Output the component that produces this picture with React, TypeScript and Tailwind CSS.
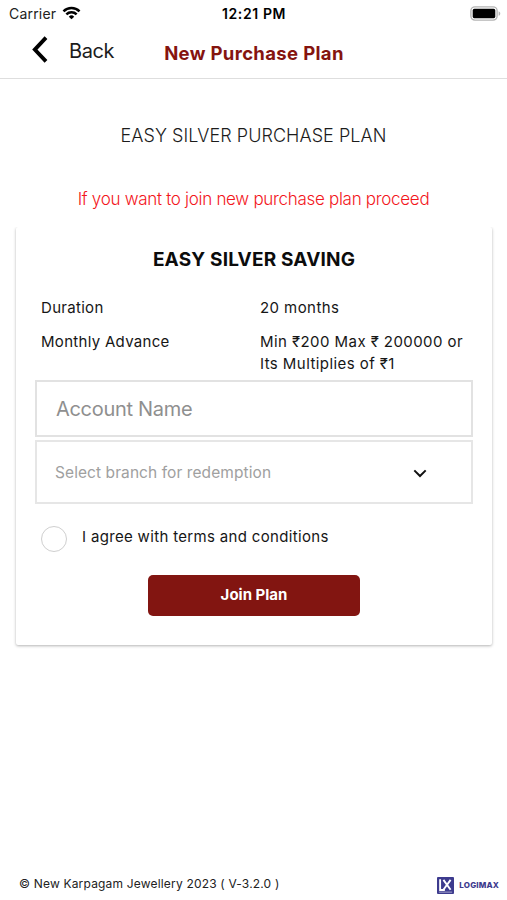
import React from 'react';

interface PlanRowProps {
  label: string;
  children: React.ReactNode;
}

const WifiIcon = () => (
  <svg className="w-[19px] h-[14px] shrink-0" viewBox="0 0 20 15" fill="none" stroke="#000" strokeWidth="2.7">
    <path d="M1.4 5.8a12.2 12.2 0 0 1 17.2 0" />
    <path d="M4.5 8.9a7.8 7.8 0 0 1 11 0" />
    <path d="M10 14.3l-2.9-2.9a4.1 4.1 0 0 1 5.8 0z" fill="#000" stroke="none" />
  </svg>
);

const BatteryIcon = () => (
  <svg className="w-[31px] h-[15px] shrink-0" viewBox="0 0 31 15">
    <rect x="0.9" y="0.9" width="26.2" height="13.2" rx="4" fill="#fff" stroke="#b4b4b4" strokeWidth="1.4" />
    <rect x="2.7" y="2.8" width="22.6" height="9.4" rx="1.6" fill="#000" />
    <path d="M28.6 5.2c2.2.8 2.2 3.8 0 4.6z" fill="#b4b4b4" />
  </svg>
);

const StatusBar = () => (
  <div className="relative h-[26px] flex items-center justify-between pl-[9px] pr-[6px] text-[14px]">
    <div className="flex items-center gap-[6px] text-[#222]">
      <span className="tracking-[0.2px]">Carrier</span>
      <WifiIcon />
    </div>
    <span className="absolute left-[222px] font-semibold tracking-[0.6px]">12:21 PM</span>
    <BatteryIcon />
  </div>
);

const Header = () => (
  <header className="h-[53px] flex items-start border-b border-[#dedede]">
    <button className="flex items-center pl-8 pt-[9px] text-[#1c1c1c]">
      <svg className="w-[16px] h-[28px]" viewBox="0 0 16 28" fill="none" stroke="#000" strokeWidth="3.8">
        <path d="M14 1.6L2.8 13.6L14 25.4" />
      </svg>
      <span className="ml-[21px] pt-[2px] text-[20px] leading-7 tracking-[-0.4px]">Back</span>
    </button>
    <h1 className="ml-[50px] pt-[13px] text-[18.5px] leading-7 font-bold tracking-[0.35px] text-[#85140f]">New Purchase Plan</h1>
  </header>
);

const PlanRow: React.FC<PlanRowProps> = ({ label, children }) => (
  <div className="flex text-[15px] leading-[22px] text-[#161616]">
    <span className="w-[219px] shrink-0 tracking-[0.3px]">{label}</span>
    <span className="whitespace-nowrap tracking-[0.43px]">{children}</span>
  </div>
);

const LogimaxLogo = () => (
  <div className="flex items-center gap-[5px] pt-[3px]">
    <svg className="w-[17px] h-[17px]" viewBox="0 0 18 18" fill="none">
      <rect width="18" height="18" rx="1" fill="#3d3b8e" />
      <path d="M3.3 2.5v11.2h5" stroke="#fff" strokeWidth="2" />
      <path d="M6.8 3l7.6 10.5M14.4 3L6.8 13.5" stroke="#fff" strokeWidth="2" />
      <path d="M2 16h14" stroke="#c9c8e2" strokeWidth="0.8" />
    </svg>
    <span className="text-[8px] leading-none font-extrabold tracking-[0.15px] text-[#3d3b8e]">LOGIMAX</span>
  </div>
);

export default function App() {
  return (
    <div className="w-[507px] h-[900px] flex flex-col bg-white overflow-hidden font-['Inter','Liberation_Sans',sans-serif] text-black">
      <StatusBar />
      <Header />

      <main className="flex-1 px-[15px]">
        <h2 className="mt-[43px] text-center text-[18px] leading-7 font-light tracking-[0.05px] text-[#1c1c1c]">
          EASY SILVER PURCHASE PLAN
        </h2>
        <p className="mt-[35px] text-center text-[17px] leading-7 font-light tracking-[-0.3px] text-[#f3161c]">
          If you want to join new purchase plan proceed
        </p>

        {/* Plan card */}
        <section className="mt-[14px] ml-px h-[418px] w-[476px] px-[19px] rounded-[2px] bg-white shadow-[0_1px_3px_rgba(0,0,0,0.3)] [clip-path:inset(0_-6px_-6px_-6px)]">
          <h3 className="pt-[19px] text-center text-[19px] leading-7 font-bold tracking-[0.17px] text-[#0c0c0c]">EASY SILVER SAVING</h3>

          <div className="mt-[23px] pl-[6px] flex flex-col gap-3">
            <PlanRow label="Duration">20 months</PlanRow>
            <PlanRow label="Monthly Advance">
              Min ₹200 Max ₹ 200000 or
              <br />
              Its Multiplies of ₹1
            </PlanRow>
          </div>

          <input
            type="text"
            placeholder="Account Name"
            className="mt-[5px] block w-[438px] h-[57px] pl-[19px] border-2 border-[#e2e2e2] text-[20px] tracking-[-0.3px] placeholder:text-[#8f8f8f] outline-none"
          />
          <button className="mt-[3px] w-[438px] h-[64px] pl-[18px] pr-[44px] pt-[2px] border-2 border-[#e6e6e6] flex items-center justify-between text-[15.5px] tracking-[0.08px] text-[#a0a0a0]">
            Select branch for redemption
            <svg className="w-[14px] h-[9px]" viewBox="0 0 14 9" fill="none" stroke="#111" strokeWidth="2">
              <path d="M1.3 1.4L7 7L12.7 1.4" />
            </svg>
          </button>

          <label className="mt-[22px] pl-[6px] flex items-start">
            <span className="w-[26px] h-[26px] rounded-full border-[1.5px] border-[#cfcfcf]" />
            <span className="ml-[15px] text-[15px] leading-[22px] tracking-[0.33px] text-[#161616]">I agree with terms and conditions</span>
          </label>

          <button className="mt-[23px] ml-[113px] block w-[212px] h-[41px] rounded-[5px] bg-[#821511] text-[15px] font-bold text-white">
            Join Plan
          </button>
        </section>
      </main>

      <footer className="h-[32px] flex items-center justify-between pl-[19px] pr-2 pb-px text-[12px] text-[#222]">
        <span className="tracking-[0.18px]">© New Karpagam Jewellery 2023 ( V-3.2.0 )</span>
        <LogimaxLogo />
      </footer>
    </div>
  );
}
